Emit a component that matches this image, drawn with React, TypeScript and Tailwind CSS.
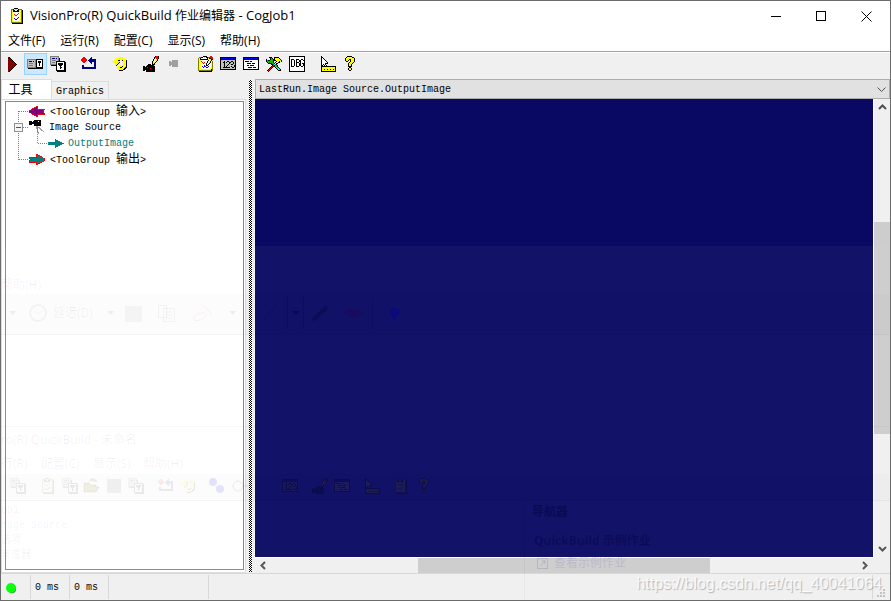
import type { ReactNode } from "react";

// Palette for the 16-colour toolbar and tree bitmaps below.
const INK: Record<string, string> = {
  k: "#000000",
  w: "#ffffff",
  y: "#ffff00",
  o: "#808000",
  r: "#ff0000",
  n: "#000080",
  b: "#0000ff",
  g: "#c0c0c0",
  d: "#808080",
  a: "#a0a0a0",
  m: "#800000",
  p: "#800080",
  t: "#008080",
  c: "#00ffff",
  e: "#00c000",
};

const PLAY = [
  "",
  "....mk",
  "....mmk",
  "....mmmk",
  "....mmmmk",
  "....mmmmmk",
  "....mmmmmmk",
  "....mmmmmmmk",
  "....mmmmmmmmk",
  "....mmmmmmmk",
  "....mmmmmmk",
  "....mmmmmk",
  "....mmmmk",
  "....mmmk",
  "....mmk",
  "....mk",
];

const SINGLE_VIEW = [
  "",
  "",
  "",
  "dddddddddkkkkkkk",
  "dgggggggdkwwwwwk",
  "dgnnngngdkwkkkwk",
  "dgggggggdkwkkkwk",
  "dgddddggdkwwkwwk",
  "dgggggggdkwwkwwk",
  "dgddddggdkwwkwwk",
  "dgggggggdkwwwwwk",
  "dddddddddkkkkkkk",
  ".kkkkkkkkkkkkkkk",
];

const FLOAT_VIEW = [
  "ddddddddd",
  "dgggggggd",
  "dgnnngngdk",
  "dgggggggdk",
  "dgddddggdk",
  "dgggggkkkkkkkkk",
  "dgdddgkwwwwwwwkk",
  "dgggggkwkkkkkwkk",
  "ddddddkwkkkkkwkk",
  ".kkkkkkwwkkkwwkk",
  "......kwwwkwwwkk",
  "......kwwwkkwwkk",
  "......kwwwkwwwkk",
  "......kwwwwwwwkk",
  "......kkkkkkkkkk",
  ".......kkkkkkkkk",
];

const RESET = [
  "",
  "..rr......n",
  ".rrrr....nn",
  "rrrrrr..nnnnnnn",
  "rrrrrr.nnnnnnnn",
  ".rrrr...nnnnnnn",
  "..rr.....nn..nn",
  "..........n..nn",
  ".............nn",
  ".nn..........nn",
  ".nn..........nn",
  ".nnnnnnnnnnnnnn",
  ".nnnnnnnnnnnnnn",
];

const REPEAT = [
  "",
  "......yyyyy",
  "....yyyyyyyyy",
  "...yyyyyyyyyyy",
  "..yyyykk..kyyyk",
  "yyyyyyyy...yyyk",
  ".yyyyyyk...yyyk",
  "..yyyyk....yyyk",
  "...yyk.....yyyk",
  "....k..yy..yyyk",
  "......yyyykyyyk",
  ".....yyykkyyykk",
  ".....yyyyyyykk",
  "......yyyyykk",
  ".......kkkk",
];

const LIVE_PEN = [
  "............krrk",
  "...........krrrk",
  "...........kyrrk",
  "..........kywyk",
  "..........kwyyk",
  ".........kywyk",
  ".........kyyk",
  ".........kyk",
  ".....kkk.kkk",
  "....kkkkkkk",
  "kk.kkkkkkkkk",
  "kkkkrkkkkkkk",
  "kkkkkkkrkkkk",
  "kkkkkkkkkkkk",
  "kk.kkkkkkkkk",
  "...kkkkkkkkk",
];

const GREY_CAMERA = [
  "",
  "",
  "",
  "",
  "......aaaaaa",
  "...aa.aaaaaa",
  "...aaaaaaaaa",
  "...aaaaaaaaa",
  "...aaaaaaaaa",
  "...aa.aaaaaa",
  "......aaaaaa",
];

const CLIPBOARD_PEN = [
  "......kkkk...rr",
  "..ookkwgwkkorrrr",
  ".oykwwwwwwkykkrr",
  ".oykkkkkkkkywykk",
  ".oyywwwwwwwkwyk",
  ".oyyrwwwwwkwykwo",
  ".oyywrwrwwkwykyo",
  ".oyywwrwwkwykwyo",
  ".oyywwwwwkykwwyo",
  ".oyywwwbwkkwwwyo",
  ".oyywbwbbwwbwwyo",
  ".oyywwbwwbbwwwyo",
  ".oyywwwwwwwwwyyo",
  ".oyyyyyyyyyyyyko",
  ".oooooooooooooko",
  "..kkkkkkkkkkkkk",
];

const CLIPBOARD = [
  ".....kkkk",
  "..ookwggwkooo",
  "..oykkwwkkyyok",
  "..oykkkkkkyyok",
  "..oywwwwwwwyok",
  "..oywwwwwrwyok",
  "..oywrwwrwwyok",
  "..oywwrrwwwyok",
  "..oywwwwwwwyok",
  "..oywwwwwbwyok",
  "..oywbwwbwwyok",
  "..oywwbbwwwyok",
  "..oywwwwwwwyok",
  "..oyyyyyyyyyok",
  "..oooooooooook",
  "...kkkkkkkkkkk",
];

const NUMBERS = [
  "",
  "kkkkkkkkkkkkkkkk",
  "kbbbbbbbbbbbbbbk",
  "knnnnnnnnnnnnnnk",
  "kggggggggggggggk",
  "kgggkggkkggkkggk",
  "kggkkgkggkkggkgk",
  "kgggkggggkgggkgk",
  "kgggkgggkggkkggk",
  "kgggkggkggggggkk",
  "kgggkgkggggkggkk",
  "kggkkkkkkkggkkgk",
  "kggggggggggggggk",
  "kkkkkkkkkkkkkkkk",
];

const LISTING = [
  "",
  "kkkkkkkkkkkkkkkk",
  "kbbbbbbbbbbbbbbk",
  "knnnnnnnnnnnnnnk",
  "kwwwwwwwwwwwwwwk",
  "kwkkkkwkkwwwwwwk",
  "kwwwwwwwwwwwwwwk",
  "kwwwkkkkwkkkwwwk",
  "kwwwwwwwwwwwwwwk",
  "kwwwkkwkkkkwwwwk",
  "kwwwwwwwwwwwwwwk",
  "kwwwwkkkkwkkkwwk",
  "kwwwwwwwwwwwwwwk",
  "kkkkkkkkkkkkkkkk",
];

const TOOLS = [
  "",
  "...kkk..kkkkk",
  "....kek.kyyyyk",
  "k...keekkyyyyyk",
  "kekkeeekkkyyyyyk",
  "keeeeeek..kyyk.k",
  ".keeeeek.kwykk",
  "..kkkkeekwkk",
  ".....kkrcek",
  "......krkeek",
  ".....krkkcek",
  "....krk..kcek",
  "...krk....kcck",
  "..krk......kcck",
  ".krk........kkk",
  "..k",
];

const DEBUG = [
  "kkkkkkkkkkkkkkkk",
  "kwwwwwwwwwwwwwwk",
  "kwwwwwwwwwwwwwwk",
  "kwkkkwwkkkwwkkwk",
  "kwkwwkwkwwkkwwkk",
  "kwkwwkwkwwkkwwwk",
  "kwkwwkwkkkwkwwwk",
  "kwkwwkwkwwkkwkkk",
  "kwkwwkwkwwkkwwkk",
  "kwkwwkwkwwkkwwkk",
  "kwkkkwwkkkwwkkwk",
  "kwwwwwwwwwwwwwwk",
  "kwwwwwwwwwwwwwwk",
  "kwwwwwwwwwwwwwwk",
  "kwwwwwwwwwwwwwwk",
  "kkkkkkkkkkkkkkkk",
];

const CURSOR_RULER = [
  ".k",
  ".kk",
  ".kwk",
  ".kwwk",
  ".kwwwk",
  ".kwwwwk",
  ".kwwwwwk",
  ".kwwwkkk",
  ".kwkwk",
  ".kk.kwk",
  ".kkkkkkkkkkkkkkk",
  ".kyyyyyyyyyyyyyk",
  ".kyyyyyyyyyyyyyk",
  ".kyykyykyykyykyk",
  ".kyyyyyyyyyyyyyk",
  ".kkkkkkkkkkkkkkk",
];

const QUESTION = [
  "....kkkkk",
  "...kyyyyykk",
  "..kyyyyyyyyk",
  "..kyyykkyyyk",
  "..kyyk.kyyyk",
  "...kk..kyyyk",
  "......kyyyk",
  ".....kyyyk",
  ".....kyyk",
  ".....kyyk",
  ".....kkkk",
  "......kk",
  ".....kyyk",
  ".....kyyk",
  "......kk",
];

const ARROW_IN = [
  ".......rr",
  ".....rrpr",
  "...rrpppr",
  "..rppppprrrrrrrr",
  "rpppppppppppppr",
  "ppppppppppppppr",
  "rpppppppppppppr",
  "..rppppppppppppr",
  "...rrppprrrrrrrr",
  ".....rrpr",
  ".......rr",
];

const ARROW_OUT = [
  ".......rr",
  ".......rtrr",
  ".......rtttrr",
  "rrrrrrrrtttttr",
  "rttttttttttttttr",
  ".rtttttttttttttt",
  "rttttttttttttttr",
  "rtttttttttttttr",
  "rrrrrrrrtttrr",
  ".......rtrr",
  ".......rr",
];

const ARROW_TEAL = [
  "",
  ".......t",
  ".......ttt",
  ".......ttttt",
  "tttttttttttttt",
  ".ttttttttttttttt",
  "tttttttttttttt",
  ".......ttttt",
  ".......ttt",
  ".......t",
];

const TRIPOD_CAMERA = [
  ".....kkkkkkk",
  "kkk.kkkkkwkk",
  "kkkkkkkkkkkk",
  "kkkkkkkkkkkk",
  "kkk..kkkkkkk",
  ".....kkkkkkk",
  ".......aa",
  ".......adaa",
  ".......ad.aa",
  "........d..aa",
  "........d...aa",
  "........d.....a",
  "........ad",
  ".........a",
];

function Bitmap({ rows, width = 16, height = 16 }: { rows: string[]; width?: number; height?: number }) {
  return (
    <svg width={width} height={height} viewBox={`0 0 ${width} ${height}`} shapeRendering="crispEdges" aria-hidden="true" className="block shrink-0">
      {rows.map((row, y) =>
        (row.match(/(.)\1*/g) ?? []).reduce<{ x: number; out: ReactNode[] }>(
          (acc, run) => {
            if (run[0] !== ".") {
              acc.out.push(<rect key={`${acc.x}-${y}`} x={acc.x} y={y} width={run.length} height={1} fill={INK[run[0]]} />);
            }
            return { x: acc.x + run.length, out: acc.out };
          },
          { x: 0, out: [] }
        ).out
      )}
    </svg>
  );
}

const MENUS = ["文件(F)", "运行(R)", "配置(C)", "显示(S)", "帮助(H)"];

const TOOL_GROUPS = [
  [
    { label: "Run", rows: PLAY },
    { label: "Single view", rows: SINGLE_VIEW, on: true },
    { label: "Floating view", rows: FLOAT_VIEW },
  ],
  [{ label: "Reset", rows: RESET }],
  [{ label: "Repeat", rows: REPEAT }],
  [
    { label: "Live display", rows: LIVE_PEN },
    { label: "Camera", rows: GREY_CAMERA },
  ],
  [
    { label: "Job properties", rows: CLIPBOARD_PEN },
    { label: "Posted items", rows: NUMBERS },
    { label: "Listing", rows: LISTING },
    { label: "Tools", rows: TOOLS },
    { label: "Debug", rows: DEBUG },
  ],
  [
    { label: "Tooltips", rows: CURSOR_RULER },
    { label: "Help", rows: QUESTION },
  ],
];

function Cjk({ children }: { children: ReactNode }) {
  return <span className="text-[12px]">{children}</span>;
}

function TitleBar() {
  return (
    <header className="flex h-[30px] shrink-0 items-center bg-white pl-2">
      <Bitmap rows={CLIPBOARD} />
      <h1 className="flex-1 whitespace-pre pl-[5px] text-[13px]">
        VisionPro(R) QuickBuild <Cjk>作业编辑器</Cjk> - CogJob1
      </h1>
      <button aria-label="Minimize" className="flex h-full w-[45px] items-center justify-center">
        <svg width="10" height="10" shapeRendering="crispEdges"><path d="M0 5.5h10" stroke="#000" /></svg>
      </button>
      <button aria-label="Maximize" className="flex h-full w-[45px] items-center justify-center">
        <svg width="10" height="10" shapeRendering="crispEdges"><path d="M.5 .5h9v9h-9z" fill="none" stroke="#000" /></svg>
      </button>
      <button aria-label="Close" className="flex h-full w-[47px] items-center justify-center">
        <svg width="11" height="11"><path d="M.5 .5l10 10M10.5 .5l-10 10" stroke="#000" /></svg>
      </button>
    </header>
  );
}

function ToolBar() {
  return (
    <div className="flex h-[27px] shrink-0 items-start gap-2 border-t border-white bg-[#f0f0f0]">
      {TOOL_GROUPS.map((group, i) => (
        <div key={i} className="flex">
          {group.map((tool) => (
            <button
              key={tool.label}
              aria-label={tool.label}
              className={
                "on" in tool
                  ? "flex h-[22px] w-[23px] items-center border border-[#99d1ff] bg-[#cce8ff] pl-[2px]"
                  : "flex h-[22px] w-[23px] items-center border border-transparent pl-[2px]"
              }
            >
              <Bitmap rows={tool.rows} />
            </button>
          ))}
        </div>
      ))}
    </div>
  );
}

// Dotted connector lines and the expander box left of the tree labels.
function TreeLines() {
  return (
    <svg width="48" height="60" shapeRendering="crispEdges" aria-hidden="true" className="absolute left-0 top-0">
      <g stroke="#808080" strokeDasharray="1 1" fill="none">
        <path d="M12.5 9v49M13 9.5h10M17 25.5h6M13 57.5h10M31.5 32v9M32 41.5h11" />
      </g>
      <rect x="8.5" y="21.5" width="8" height="8" fill="#f4f4f4" stroke="#919191" />
      <path d="M10 25.5h5" stroke="#3c54a0" />
    </svg>
  );
}

function ToolTree() {
  return (
    <div className="relative flex-1 border border-[#828790] bg-white">
      <TreeLines />
      <ul className="relative pt-[2px] font-['Liberation_Mono','Noto_Sans_CJK_SC',monospace] text-[10px] leading-4">
        <li className="flex h-4 items-center gap-1 pl-[23px]">
          <Bitmap rows={ARROW_IN} height={12} />
          <span className="pl-[1px]">&lt;ToolGroup <Cjk>输入</Cjk>&gt;</span>
        </li>
        <li>
          <div className="flex h-4 items-center gap-1 pl-[23px]">
            <Bitmap rows={TRIPOD_CAMERA} />
            <span>Image Source</span>
          </div>
          <ul>
            <li className="flex h-4 items-center gap-1 pl-[42px] text-[#008080]">
              <Bitmap rows={ARROW_TEAL} height={12} />
              <span>OutputImage</span>
            </li>
          </ul>
        </li>
        <li className="flex h-4 items-center gap-1 pl-[23px]">
          <Bitmap rows={ARROW_OUT} height={12} />
          <span className="pl-[1px]">&lt;ToolGroup <Cjk>输出</Cjk>&gt;</span>
        </li>
      </ul>
    </div>
  );
}

function LeftPane() {
  return (
    <section className="flex w-[245px] shrink-0 flex-col">
      <div role="tablist" className="flex h-5 items-end">
        <button role="tab" aria-selected="true" className="h-5 w-[51px] border border-b-0 border-[#dcdcdc] bg-white pr-3 text-[12px] leading-[18px]">
          工具
        </button>
        <button role="tab" aria-selected="false" className="h-[18px] w-[57px] border border-b-0 border-l-0 border-[#dcdcdc] bg-[#f0f0f0] pt-[1px] font-['Liberation_Mono',monospace] text-[10px]">
          Graphics
        </button>
      </div>
      <div className="flex flex-1 border border-[#dcdcdc] bg-white pt-[1px] pr-[1px] pb-[2px] pl-[3px]">
        <ToolTree />
      </div>
    </section>
  );
}

function Chevron({ d }: { d: string }) {
  return (
    <svg width="9" height="9" viewBox="0 0 9 9" fill="none" stroke="#505050" strokeWidth="2" aria-hidden="true">
      <path d={d} />
    </svg>
  );
}

function ImagePane() {
  return (
    <section className="flex min-w-0 flex-1 flex-col">
      <div className="relative">
        <select
          aria-label="Image"
          className="block h-5 w-full appearance-none border border-[#adadad] bg-[#e1e1e1] pl-[3px] font-['Liberation_Mono',monospace] text-[10px]"
        >
          <option>LastRun.Image Source.OutputImage</option>
        </select>
        <svg width="9" height="6" fill="none" stroke="#505050" aria-hidden="true" className="pointer-events-none absolute right-1 top-2">
          <path d="M.5 .5l4 4l4-4" />
        </svg>
      </div>
      <div className="grid flex-1 grid-cols-[1fr_17px] grid-rows-[1fr_16px] bg-[#f0f0f0]">
        <div className="bg-[#090963]" />
        <div className="flex flex-col border-l border-white">
          <button aria-label="Scroll up" className="flex h-[17px] items-center justify-center"><Chevron d="M1 6l3.500-3.500L8 6" /></button>
          <div className="flex flex-1 flex-col">
            <div className="flex-[106]" />
            <div className="flex-[212] bg-[#cdcdcd]" />
            <div className="flex-[106]" />
          </div>
          <button aria-label="Scroll down" className="flex h-[17px] items-center justify-center"><Chevron d="M1 3l3.500 3.500L8 3" /></button>
        </div>
        <div className="flex border-t border-white">
          <button aria-label="Scroll left" className="flex w-[17px] items-center justify-center"><Chevron d="M6 1l-3.500 3.500L6 8" /></button>
          <div className="flex flex-1">
            <div className="flex-[146]" />
            <div className="flex-[292] bg-[#cdcdcd]" />
            <div className="flex-[146]" />
          </div>
          <button aria-label="Scroll right" className="flex w-[17px] items-center justify-center"><Chevron d="M3 1l3.500 3.500L3 8" /></button>
        </div>
      </div>
    </section>
  );
}

function StatusBar() {
  return (
    <footer className="flex h-[27px] shrink-0 border-t border-[#d7d7d7] bg-[#f0f0f0] py-[1px] font-['Liberation_Mono',monospace] text-[10px] leading-[26px]">
      <div className="w-[30px] border-r border-[#d7d7d7] pl-[5px] pt-2">
        <svg width="11" height="11" role="img" aria-label="Ready">
          <circle cx="6" cy="6" r="4" fill="#107010" />
          <circle cx="5" cy="5" r="5" fill="#00ff00" />
        </svg>
      </div>
      <div className="w-[39px] border-r border-[#d7d7d7] pl-1">0 ms</div>
      <div className="w-[39px] border-r border-[#d7d7d7] pl-1">0 ms</div>
      <div className="w-[100px] border-r border-[#d7d7d7]" />
      <div className="flex-1 border-r border-[#d7d7d7]" />
      <div className="flex w-[17px] items-end justify-end pb-[1px] pr-1">
        <svg width="9" height="9" fill="#bfbfbf" aria-hidden="true">
          <path d="M6 0h2v2h-2zM3 3h2v2h-2zM6 3h2v2h-2zM0 6h2v2h-2zM3 6h2v2h-2zM6 6h2v2h-2z" />
        </svg>
      </div>
    </footer>
  );
}

// Toolbar bitmaps of the window behind, with their left edges.
const BEHIND_ICONS = [
  { left: 9, rows: FLOAT_VIEW },
  { left: 39, rows: CLIPBOARD },
  { left: 61, rows: FLOAT_VIEW },
  { left: 127, rows: FLOAT_VIEW },
  { left: 157, rows: RESET },
  { left: 179, rows: REPEAT },
];

const BEHIND_ICONS_DARK = [
  { left: 281, rows: NUMBERS },
  { left: 311, rows: LIVE_PEN },
  { left: 333, rows: LISTING },
  { left: 363, rows: CURSOR_RULER },
  { left: 392, rows: CLIPBOARD },
  { left: 416, rows: QUESTION },
];

// Windows behind this one shine through its lower part very faintly.
function ShowThrough() {
  return (
    <div aria-hidden="true" className="pointer-events-none absolute inset-x-0 top-[245px] bottom-0 overflow-hidden whitespace-pre bg-white/4 text-[12px] leading-4">
      <div className="absolute inset-x-0 top-[48px] h-[41px] border-b border-black/3 bg-black/1" />
      <div className="absolute inset-x-0 top-[180px] border-t border-black/3" />
      <div className="absolute inset-x-0 top-[228px] h-[27px] border-b border-black/3 bg-black/1" />
      <div className="absolute left-[523px] top-[255px] bottom-0 border-l border-black/4" />

      <div className="text-black/6">
        <span className="absolute left-0 top-[31px]">帮助(H)</span>
        <span className="absolute left-[52px] top-[59px]">延迟(D)</span>
        <span className="absolute left-0 top-[186px]">ro(R) QuickBuild - 未命名</span>
        <span className="absolute left-0 top-[210px]">行(R)</span>
        <span className="absolute left-[40px] top-[210px]">配置(C)</span>
        <span className="absolute left-[92px] top-[210px]">显示(S)</span>
        <span className="absolute left-[142px] top-[210px]">帮助(H)</span>
        <div className="absolute left-0 top-[257px] font-['Liberation_Mono','Noto_Sans_CJK_SC',monospace] text-[10px] leading-[15px]">
          <p>ob1</p>
          <p>mage Source</p>
          <p>选项</p>
          <p>管理器</p>
        </div>
      </div>

      <svg width="240" height="20" fill="none" stroke="#000" strokeOpacity=".04" className="absolute left-0 top-[58px]">
        <circle cx="37" cy="9" r="8" strokeWidth="2" />
        <path d="M33 7l4 3l4-3" />
        <path d="M124 2h17v16h-17zM128 2h9v7h-9zM128 12h8v6h-8z" fill="#000" fillOpacity=".03" stroke="none" />
        <path d="M157.500 1.500h8v12h-8zM162.500 4.500h11v13h-11zM165 8h6M165 11h6M165 14h6" />
        <path d="M193 13c3-6 17-5 10 1c-6 4-12 3-10-1M203 2l8 9" stroke="#f00" strokeOpacity=".06" />
        <path d="M8 7h7l-3 4zM106 7h7l-3 4zM228 7h7l-3 4z" fill="#000" fillOpacity=".06" stroke="none" />
      </svg>
      <svg width="150" height="34" fill="none" className="absolute left-[255px] top-[50px]">
        <path d="M5 26l16-17M31.500 0v33M47.500 0v33M116.500 1v32" stroke="#00003c" strokeOpacity=".2" />
        <path d="M57 24l14-13" stroke="#00003c" strokeOpacity=".35" strokeWidth="4" />
        <path d="M36 15h8l-4 4z" fill="#00003c" fillOpacity=".5" />
        <path d="M87 16l12-4l9 5l-10 6z" fill="#280050" fillOpacity=".3" />
        <path d="M138 25l-5-9c0-6 11-6 11 0z" fill="#000096" fillOpacity=".4" />
      </svg>

      {BEHIND_ICONS.map((icon) => (
        <span key={icon.left} className="absolute top-[232px] opacity-7" style={{ left: icon.left }}>
          <Bitmap rows={icon.rows} />
        </span>
      ))}
      <svg width="190" height="18" fill="none" className="absolute left-[82px] top-[231px]">
        <path d="M1 15V6h5l1 2h6v2h3l-3 5zM6 4c3-4 7-2 8 1" fill="#808000" fillOpacity=".1" stroke="#000" strokeOpacity=".05" />
        <path d="M24 2h14v14h-14zM27 2h8v6h-8zM27 11h8v5h-8z" fill="#000" fillOpacity=".05" />
        <circle cx="130" cy="5" r="4" fill="#0000ff" fillOpacity=".1" />
        <circle cx="137" cy="12" r="4" fill="#0000ff" fillOpacity=".1" />
        <path d="M150 9a5 5 0 1 0 10 0a5 5 0 1 0-10 0M160 9h5" stroke="#000" strokeOpacity=".08" />
      </svg>
      {BEHIND_ICONS_DARK.map((icon) => (
        <span key={icon.left} className="absolute top-[232px] opacity-25 brightness-25" style={{ left: icon.left }}>
          <Bitmap rows={icon.rows} />
        </span>
      ))}

      <span className="absolute left-[531px] top-[258px] font-bold text-[#000040]/50">导航器</span>
      <span className="absolute left-[533px] top-[287px] font-bold text-[#000040]/40">QuickBuild 示例作业</span>
      <span className="absolute left-[553px] top-[309px] text-[#0000a0]/10">查看示例作业</span>
      <svg width="12" height="12" fill="none" stroke="#000080" strokeOpacity=".12" className="absolute left-[536px] top-[312px]">
        <path d="M.5 .5h10v10h-10zM3 8l5-5M5 3h3v3" />
      </svg>
    </div>
  );
}

export default function App() {
  return (
    <main className="relative flex h-screen min-h-[400px] flex-col overflow-hidden border border-[#6b6b6b] bg-[#f0f0f0] font-['Open_Sans','Noto_Sans_CJK_SC',sans-serif] text-black">
      <TitleBar />
      <nav className="flex h-[21px] shrink-0 items-center gap-[15px] border-b border-[#a0a0a0] bg-white pl-[7px] text-[12px]">
        {MENUS.map((menu) => (
          <button key={menu} className="leading-4">{menu}</button>
        ))}
      </nav>
      <ToolBar />
      <div className="flex min-h-0 flex-1">
        <LeftPane />
        <div className="my-[1px] mx-[3px] w-[3px] shrink-0 bg-[repeating-conic-gradient(#000_0_25%,#fff_0_50%)] bg-size-[2px_2px]" />
        <ImagePane />
      </div>
      <StatusBar />
      <ShowThrough />
      <p className="pointer-events-none absolute right-2 bottom-1 font-['Liberation_Sans',sans-serif] text-[16px] leading-6 text-white/80 [text-shadow:1px_1px_1px_rgba(0,0,0,0.25)]">
        https://blog.csdn.net/qq_40041064
      </p>
    </main>
  );
}
